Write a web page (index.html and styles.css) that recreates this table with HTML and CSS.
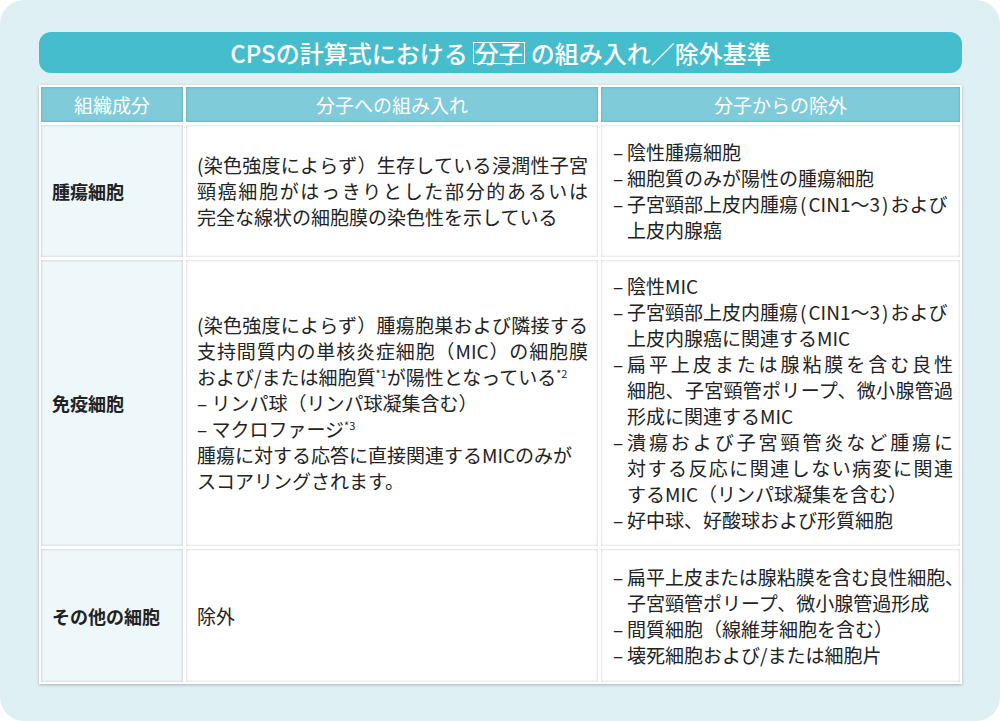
FILE: index.html
```html
<!DOCTYPE html>
<html lang="ja">
<head>
<meta charset="utf-8">
<title>CPSの計算式における分子の組み入れ／除外基準</title>
<link rel="stylesheet" href="styles.css">
</head>
<body>
<div class="panel">
  <h1 class="title">CPSの計算式における<span class="boxed">分子</span>の組み入れ／除外基準</h1>
  <div class="grid">
    <div class="hd">組織成分</div>
    <div class="hd">分子への組み入れ</div>
    <div class="hd">分子からの除外</div>

    <div class="lbl">腫瘍細胞</div>
    <div class="cell">
      <span class="ln j">(染色強度によらず）生存している浸潤性子宮</span>
      <span class="ln j">頸癌細胞がはっきりとした部分的あるいは</span>
      <span class="ln">完全な線状の細胞膜の染色性を示している</span>
    </div>
    <div class="cell list">
      <div class="item"><span class="dash">–</span><div class="body"><span class="ln">陰性腫瘍細胞</span></div></div>
      <div class="item"><span class="dash">–</span><div class="body"><span class="ln">細胞質のみが陽性の腫瘍細胞</span></div></div>
      <div class="item"><span class="dash">–</span><div class="body"><span class="ln">子宮頸部上皮内腫瘍<span class="par">(</span>CIN1〜3<span class="par">)</span>および</span><span class="ln">上皮内腺癌</span></div></div>
    </div>

    <div class="lbl">免疫細胞</div>
    <div class="cell">
      <span class="ln j">(染色強度によらず）腫瘍胞巣および隣接する</span>
      <span class="ln j">支持間質内の単核炎症細胞（MIC）の細胞膜</span>
      <span class="ln">および/または細胞質<sup class="note">*1</sup>が陽性となっている<sup class="note">*2</sup></span>
      <span class="ln">– リンパ球（リンパ球凝集含む）</span>
      <span class="ln">– マクロファージ<sup class="note">*3</sup></span>
      <span class="ln">腫瘍に対する応答に直接関連するMICのみが</span>
      <span class="ln">スコアリングされます。</span>
    </div>
    <div class="cell list">
      <div class="item"><span class="dash">–</span><div class="body"><span class="ln">陰性MIC</span></div></div>
      <div class="item"><span class="dash">–</span><div class="body"><span class="ln">子宮頸部上皮内腫瘍<span class="par">(</span>CIN1〜3<span class="par">)</span>および</span><span class="ln">上皮内腺癌に関連するMIC</span></div></div>
      <div class="item"><span class="dash">–</span><div class="body"><span class="ln j">扁平上皮または腺粘膜を含む良性</span><span class="ln j">細胞、子宮頸管ポリープ、微小腺管過</span><span class="ln">形成に関連するMIC</span></div></div>
      <div class="item"><span class="dash">–</span><div class="body"><span class="ln j">潰瘍および子宮頸管炎など腫瘍に</span><span class="ln j">対する反応に関連しない病変に関連</span><span class="ln">するMIC（リンパ球凝集を含む）</span></div></div>
      <div class="item"><span class="dash">–</span><div class="body"><span class="ln">好中球、好酸球および形質細胞</span></div></div>
    </div>

    <div class="lbl">その他の細胞</div>
    <div class="cell">
      <span class="ln">除外</span>
    </div>
    <div class="cell list">
      <div class="item"><span class="dash">–</span><div class="body"><span class="ln j prop">扁平上皮または腺粘膜を含む良性細胞、</span><span class="ln">子宮頸管ポリープ、微小腺管過形成</span></div></div>
      <div class="item"><span class="dash">–</span><div class="body"><span class="ln">間質細胞（線維芽細胞を含む）</span></div></div>
      <div class="item"><span class="dash">–</span><div class="body"><span class="ln">壊死細胞および/または細胞片</span></div></div>
    </div>
  </div>
</div>
</body>
</html>
```

FILE: styles.css
```css
html, body {
  margin: 0;
  padding: 0;
  background: #ffffff;
}

body {
  font-family: "Noto Sans CJK JP", "Noto Sans", sans-serif;
  color: #222222;
}

.panel {
  box-sizing: border-box;
  width: 1000px;
  height: 721px;
  background: #dff0f5;
  border-radius: 24px;
  padding: 32px 38px 0 39px;
}

.title {
  margin: 0;
  height: 41px;
  border-radius: 12px;
  background: #45bdcd;
  color: #ffffff;
  font-size: 24px;
  font-weight: 500;
  line-height: 1;
  display: flex;
  align-items: center;
  justify-content: center;
  white-space: nowrap;
}

.boxed {
  display: inline-block;
  border: 1px solid #ffffff;
  line-height: 19px;
  height: 20px;
  padding: 0 1px;
  margin: 0 6px 0 5px;
}

.grid {
  margin-top: 12px;
  display: grid;
  grid-template-columns: 142px 412px 359px;
  grid-template-rows: 35px 132px 286px 133px;
  gap: 3px;
  padding: 2px;
  background: #ffffff;
  box-shadow: 0 1px 3px rgba(0, 0, 0, 0.25);
}

.grid > div {
  box-shadow: inset 0 0 3px rgba(0, 0, 0, 0.22);
}

.hd {
  background: #80cbd9;
  color: #ffffff;
  font-size: 19px;
  display: flex;
  align-items: center;
  justify-content: center;
  line-height: 1;
}

.lbl {
  background: #eef7fa;
  font-size: 18px;
  font-weight: 700;
  display: flex;
  align-items: center;
  padding-left: 11px;
  white-space: nowrap;
}

.cell {
  background: #ffffff;
  font-size: 19px;
  line-height: 26px;
  display: flex;
  flex-direction: column;
  justify-content: center;
  padding: 0 10px 0 11px;
}

.cell.list {
  padding: 0 7px 0 12px;
}

.ln {
  display: block;
  white-space: nowrap;
}

.ln.j {
  text-align: justify;
  text-align-last: justify;
}

.ln.prop {
  font-feature-settings: "palt";
}

.par {
  margin: 0 2px;
}

.item {
  display: flex;
}

.dash {
  flex: 0 0 14px;
}

.body {
  flex: 1 1 auto;
  min-width: 0;
}

.note {
  font-size: 11px;
  line-height: 0;
  vertical-align: 7px;
}
```
